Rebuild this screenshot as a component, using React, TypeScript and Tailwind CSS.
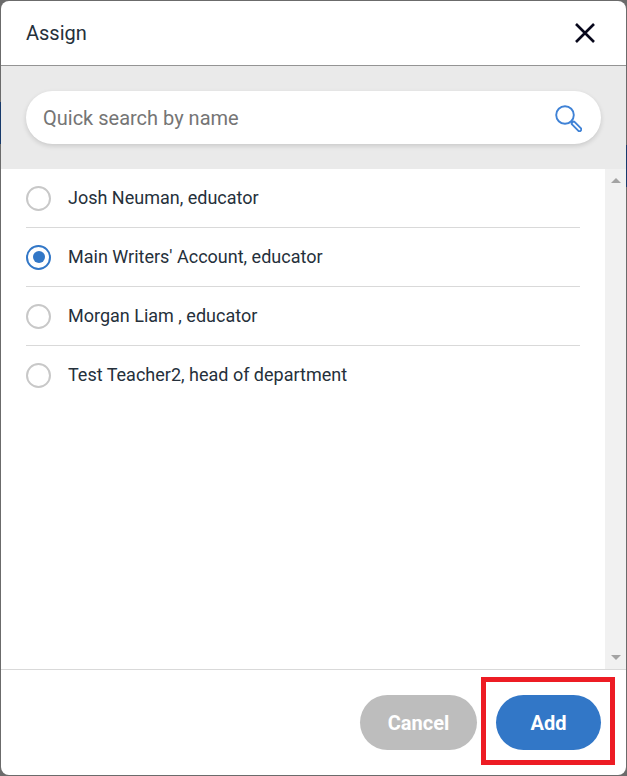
import { useState } from "react";

type Person = {
  id: string;
  label: string;
};

const PEOPLE: Person[] = [
  { id: "josh", label: "Josh Neuman, educator" },
  { id: "main", label: "Main Writers' Account, educator" },
  { id: "morgan", label: "Morgan Liam , educator" },
  { id: "test", label: "Test Teacher2, head of department" },
];

function CloseIcon() {
  return (
    <svg width="20" height="20" viewBox="0 0 20 20" fill="none" aria-hidden="true">
      <path d="M1 1L19 19M19 1L1 19" stroke="#08081c" strokeWidth="2.6" />
    </svg>
  );
}

function SearchIcon() {
  return (
    <svg
      width="28"
      height="28"
      viewBox="0 0 28 28"
      fill="none"
      stroke="#3f82d6"
      strokeWidth="1.9"
      aria-hidden="true"
    >
      <circle cx="11" cy="11" r="8.8" />
      <path d="M17.2 17.2L19 19" />
      <rect x="16.5" y="20.6" width="12" height="3.6" rx="1.8" transform="rotate(45 22.5 22.4)" />
    </svg>
  );
}

function ScrollTrack() {
  return (
    <div className="flex w-[21px] flex-col items-center justify-between bg-[#f1f1f1] py-2" aria-hidden="true">
      <svg width="10" height="6" viewBox="0 0 10 6">
        <path d="M0 6L5 1L10 6Z" fill="#a3a3a3" />
      </svg>
      <svg width="10" height="6" viewBox="0 0 10 6">
        <path d="M0 0L5 5L10 0Z" fill="#a3a3a3" />
      </svg>
    </div>
  );
}

function PersonRow({
  person,
  checked,
  onSelect,
}: {
  person: Person;
  checked: boolean;
  onSelect: () => void;
}) {
  return (
    <li className="border-b border-[#d9d9d9] last:border-b-0">
      <label htmlFor={person.id} className="flex h-[58px] cursor-pointer items-center gap-[17px] text-lg">
        <input
          type="radio"
          id={person.id}
          name="assignee"
          checked={checked}
          onChange={onSelect}
          className="grid size-[25px] shrink-0 appearance-none place-items-center rounded-full border-2 border-[#c8c8c8] bg-white before:size-3 before:rounded-full checked:border-[#3277c7] checked:before:bg-[#3277c7]"
        />
        <span className="whitespace-pre">{person.label}</span>
      </label>
    </li>
  );
}

export default function App() {
  const [selected, setSelected] = useState("main");
  const [query, setQuery] = useState("");

  const people = PEOPLE.filter((person) =>
    person.label.toLowerCase().includes(query.toLowerCase()),
  );

  return (
    <div className="relative flex min-h-screen bg-[#6b6b6b] p-px font-[Roboto,sans-serif] text-[#25303b]">
      {/* page toolbar showing behind the dialog */}
      <div className="absolute top-[102px] left-0 h-[42px] w-px bg-[#173a6b]" />
      <div className="absolute top-[145px] right-0 h-[42px] w-px bg-[#173a6b]" />

      <div
        role="dialog"
        aria-labelledby="assign-title"
        className="flex flex-1 flex-col overflow-hidden rounded-lg bg-white"
      >
        <header className="flex h-[65px] items-center justify-between border-b border-[#949494] pr-[31px] pl-[25px]">
          <h1 id="assign-title" className="text-xl">
            Assign
          </h1>
          <button type="button" aria-label="Close" className="cursor-pointer">
            <CloseIcon />
          </button>
        </header>

        <div className="bg-[#eaeaea] p-[25px]">
          <div className="flex h-[53px] items-center rounded-full bg-white pr-[19px] pl-[17px] shadow-[0_2px_5px_rgba(0,0,0,0.14)]">
            <input
              type="text"
              aria-label="Quick search by name"
              placeholder="Quick search by name"
              value={query}
              onChange={(event) => setQuery(event.target.value)}
              className="min-w-0 flex-1 text-xl outline-none placeholder:text-[#757575]"
            />
            <button type="button" aria-label="Search" className="cursor-pointer">
              <SearchIcon />
            </button>
          </div>
        </div>

        <div className="flex flex-1">
          <ul className="flex-1 px-[25px]">
            {people.map((person) => (
              <PersonRow
                key={person.id}
                person={person}
                checked={selected === person.id}
                onSelect={() => setSelected(person.id)}
              />
            ))}
          </ul>
          <ScrollTrack />
        </div>

        <footer className="flex items-start justify-end gap-1 border-t border-[#d9d9d9] pt-[7px] pr-[11px] pb-[10px] text-xl font-bold text-white">
          <div className="pt-[18px]">
            <button type="button" className="h-[55px] w-[117px] cursor-pointer rounded-full bg-[#bdbdbd]">
              Cancel
            </button>
          </div>
          <div className="border-5 border-[#ed1c24] pt-[13px] pr-[9px] pb-[10px] pl-[10px]">
            <button type="button" className="h-[55px] w-[105px] cursor-pointer rounded-full bg-[#3277c7]">
              Add
            </button>
          </div>
        </footer>
      </div>
    </div>
  );
}
